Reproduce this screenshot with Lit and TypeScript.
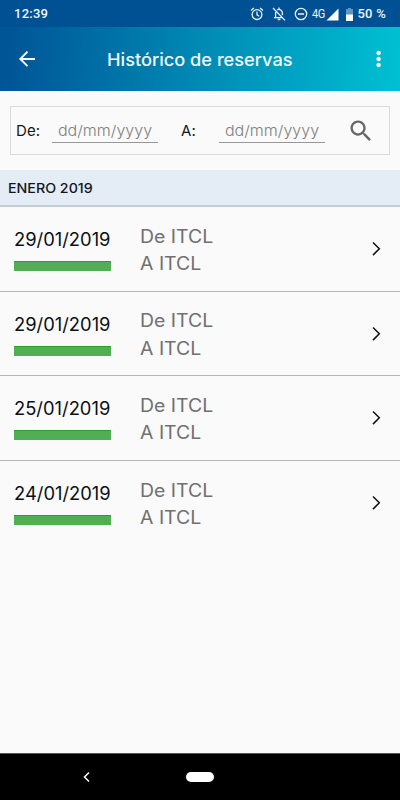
import { LitElement, html, css, svg } from "lit";
import { customElement, property } from "lit/decorators.js";

@customElement("status-bar")
class StatusBar extends LitElement {
  static styles = css`
    :host { display: flex; height: 27px; background: #005193; color: #eef5fb; position: relative;
      font: 500 13px/28px Roboto, sans-serif; box-sizing: border-box; padding: 0 14px; justify-content: space-between; }
    .time { letter-spacing: 0.25px; }
    .right { display: flex; align-items: center; width: 136px; height: 28px; }
    svg { display: block; flex: none; }
    .alarm { margin-right: 8px; }
    .bell { margin-right: 8px; }
    .dnd { margin-right: 4px; }
    .net { font-size: 12px; font-weight: 400; width: 15px; letter-spacing: -0.6px; white-space: nowrap; transform: scaleX(0.92); transform-origin: left; }
    .signal { margin-right: 7px; }
    .battery { margin-right: 4px; }
    .pct { white-space: nowrap; letter-spacing: 0.25px; }
  `;
  render() {
    return html`
      <span class="time">12:39</span>
      <div class="right">
        <svg class="alarm" width="14" height="14" viewBox="0 0 14 14" fill="none" stroke="#e9f1f8" stroke-width="1.3">
          <circle cx="7" cy="7.6" r="4.9" /><path d="M7 4.6v3.2l2.2 1.4M1 3.4l2.9-2.4M13 3.4L10.100 1" />
        </svg>
        <svg class="bell" width="14" height="14" viewBox="0 0 14 14" fill="none" stroke="#e9f1f8" stroke-width="1.3">
          <path d="M3.600 4.900V10M2 10.600h8.500M5.200 3Q7 1.700 9 3.200Q10.400 4.400 10.400 6v2.300M7 .6v1.500M1 1l12 12.400" />
          <path d="M5.700 12.400h2.600" stroke-width="1.600" />
        </svg>
        <svg class="dnd" width="14" height="14" viewBox="0 0 14 14" fill="none" stroke="#e9f1f8" stroke-width="1.3">
          <circle cx="7" cy="7" r="5.700" /><path d="M3.900 7h6.200" stroke-width="1.500" />
        </svg>
        <span class="net">4G</span>
        <svg class="signal" width="13" height="13" viewBox="0 0 13 13"><path d="M12.500 .5v12H.5z" fill="#fff" /></svg>
        <svg class="battery" width="7" height="13" viewBox="0 0 7 13">
          <path d="M2 0h3v1h2v6H0V1h2z" fill="#5f97c0" /><path d="M0 6.500h7V13H0z" fill="#fff" />
        </svg>
        <span class="pct">50 %</span>
      </div>`;
  }
}

@customElement("booking-row")
class BookingRow extends LitElement {
  @property() date = "";
  static styles = css`
    :host { display: flex; height: 84.7px; box-sizing: border-box; border-bottom: 1px solid #b4b6b8; padding-left: 14px; }
    :host([last]) { border-bottom-color: transparent; }
    .left { width: 126px; padding-top: 20px; }
    .date { font-size: 18px; line-height: 26px; color: #0b0f16; white-space: nowrap; transform: scaleX(1.02); transform-origin: left; }
    .bar { width: 97px; height: 10px; margin-top: 8px; background: #52ad55; border-top: 1px solid #27a035; box-sizing: border-box; }
    .route { width: 228px; padding-top: 15.5px; font-size: 18px; line-height: 27.5px; color: #707070; }
    .line { transform: scaleX(1.08); transform-origin: left; width: 100px; }
    svg { display: block; margin-top: 34px; }
  `;
  render() {
    return html`
      <div class="left"><div class="date">${this.date}</div><div class="bar"></div></div>
      <div class="route"><div class="line">De ITCL</div><div class="line">A ITCL</div></div>
      <svg width="16" height="16" viewBox="0 0 16 16" fill="none" stroke="#111" stroke-width="1.5">
        <path d="M5 1.500l6.300 6.300L5 14.100" />
      </svg>`;
  }
}

@customElement("app-root")
class AppRoot extends LitElement {
  static styles = css`
    :host { display: flex; flex-direction: column; width: 400px; height: 800px; background: #fafafa;
      font-family: Inter, sans-serif; overflow: hidden; }
    .bar { height: 64px; flex: none; display: flex; align-items: center; color: #f1f9fc;
      background: linear-gradient(93deg, #005596 2%, #00bed2 98%); }
    .back { margin-left: 18px; }
    .title { margin-left: 71px; width: 263px; font-size: 17px; font-weight: 500; line-height: 24px; padding-top: 1px; white-space: nowrap;
      transform: scaleX(1.07); transform-origin: left; }
    svg { display: block; flex: none; }
    .filter { flex: none; margin: 15px 10px 0; height: 49px; box-sizing: border-box; border: 1px solid #d9dadb;
      display: flex; align-items: center; font-size: 15px; color: #171717; }
    .label { padding-left: 5px; width: 36px; box-sizing: border-box; letter-spacing: 0.1px; }
    .second { width: 42px; padding-left: 4px; margin-left: 19px; }
    .field { margin-left: 5px; width: 106px; height: 24px; line-height: 23px; box-sizing: border-box; color: #808080;
      border-bottom: 1px solid #989898; font-weight: 300; text-align: center; white-space: nowrap; }
    .hint { display: inline-block; transform: scaleX(1.07); }
    .second + .field { margin-left: 0; }
    .search { margin-left: 22px; }
    .month { flex: none; margin-top: 15px; height: 37px; box-sizing: border-box; background: #e4ecf5; border-bottom: 2px solid #c6ccd3;
      padding-left: 8px; font-size: 13px; font-weight: 500; line-height: 37px; color: #12161c; }
    .caption { display: inline-block; transform: scaleX(1.095); transform-origin: left; }
    .list { flex: 1; }
    .nav { height: 47px; flex: none; box-sizing: border-box; border-top: 1px solid #555; background: #000; display: flex; align-items: center; }
    .navback { margin-left: 82px; }
    .home { width: 28px; height: 10px; border-radius: 5px; background: #fff; margin-left: 95px; }
  `;
  render() {
    const dates = ["29/01/2019", "29/01/2019", "25/01/2019", "24/01/2019"];
    return html`
      <status-bar></status-bar>
      <header class="bar">
        <svg class="back" width="18" height="18" viewBox="0 0 18 18" fill="none" stroke="#f4f9fc" stroke-width="1.900">
          <path d="M9.500 1.700L2.300 9l7.200 7.200M2.500 9H17" />
        </svg>
        <span class="title">Histórico de reservas</span>
        <svg width="18" height="18" viewBox="0 0 18 18" fill="#f4f9fc">
          ${[3, 9, 15].map((y) => svg`<circle cx="8.600" cy=${y} r="2.200" />`)}
        </svg>
      </header>
      <section class="filter">
        <span class="label">De:</span><div class="field"><span class="hint">dd/mm/yyyy</span></div>
        <span class="label second">A:</span><div class="field"><span class="hint">dd/mm/yyyy</span></div>
        <svg class="search" width="28" height="28" viewBox="0 0 24 24" fill="#666">
          <path d="M15.500 14h-.79l-.28-.27C15.410 12.590 16 11.110 16 9.500 16 5.910 13.090 3 9.500 3S3 5.910 3 9.500 5.910 16 9.500 16c1.610 0 3.090-.59 4.230-1.570l.27.28v.79l5 4.990L20.490 19l-4.990-5zm-6 0C7.010 14 5 11.990 5 9.500S7.010 5 9.500 5 14 7.010 14 9.500 11.990 14 9.500 14z" />
        </svg>
      </section>
      <div class="month"><span class="caption">ENERO 2019</span></div>
      <main class="list">
        ${dates.map((d, i) => html`<booking-row .date=${d} ?last=${i === dates.length - 1}></booking-row>`)}
      </main>
      <nav class="nav">
        <svg class="navback" width="9" height="12" viewBox="0 0 9 12" fill="none" stroke="#f5f5f5" stroke-width="1.600"><path d="M7 1.500L2.500 6 7 10.500" /></svg>
        <div class="home"></div>
      </nav>`;
  }
}
